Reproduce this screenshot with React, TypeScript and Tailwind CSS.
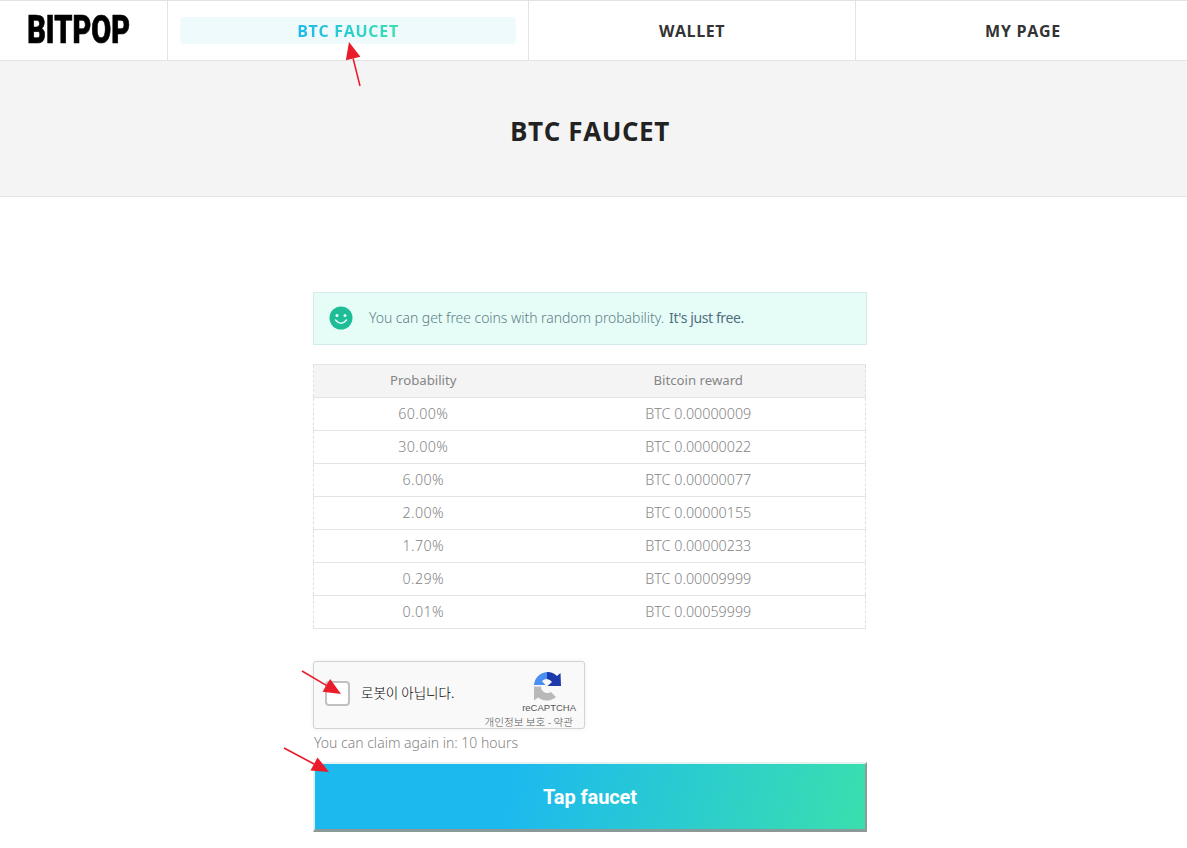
const rows = [
  ["60.00%", "BTC 0.00000009"],
  ["30.00%", "BTC 0.00000022"],
  ["6.00%", "BTC 0.00000077"],
  ["2.00%", "BTC 0.00000155"],
  ["1.70%", "BTC 0.00000233"],
  ["0.29%", "BTC 0.00009999"],
  ["0.01%", "BTC 0.00059999"],
];

function Arrow({ x1, y1, x2, y2 }: { x1: number; y1: number; x2: number; y2: number }) {
  const a = Math.atan2(y2 - y1, x2 - x1);
  const L = 17;
  const W = 7.5;
  const bx = x2 - L * Math.cos(a);
  const by = y2 - L * Math.sin(a);
  const px = -Math.sin(a) * W;
  const py = Math.cos(a) * W;
  return (
    <g>
      <line x1={x1} y1={y1} x2={bx} y2={by} stroke="#ea1c2b" strokeWidth="1.6" />
      <polygon points={`${x2},${y2} ${bx + px},${by + py} ${bx - px},${by - py}`} fill="#ea1c2b" />
    </g>
  );
}

function Recaptcha() {
  return (
    <svg width="28" height="29" viewBox="0 0 28 29" className="block">
      <path d="M14 0 L14 7 A7 7 0 0 0 9 9 L12.5 13 L1 13 A14 14 0 0 1 14 0 Z" fill="#4a90f2" />
      <path d="M14 0 A14 14 0 0 1 24 4 L27.5 1 L28 14 L14.5 14 L19 10 A7 7 0 0 0 14 7 Z" fill="#1c3aa9" />
      <path d="M1 14.5 L8 14.5 A6.5 6.5 0 0 0 18 20 L23 25 A14 14 0 0 1 5 25.5 L1 28.5 Z" fill="#b9b9b9" />
    </svg>
  );
}

export default function App() {
  return (
    <div className="relative w-[1187px] h-[848px] overflow-hidden bg-white font-['Open_Sans',sans-serif]">
      <header className="flex h-[61px] border-t border-b border-[#e3e3e3]">
        <div className="w-[168px] shrink-0 border-r border-[#e3e3e3] flex items-center justify-center pr-[10px] pb-px">
          <span className="font-['Roboto',sans-serif] font-black text-[38px] leading-none text-black inline-block scale-x-[0.76] [-webkit-text-stroke:0.7px_black]">
            BITPOP
          </span>
        </div>
        <div className="w-[361px] shrink-0 border-r border-[#e3e3e3] px-3 py-4">
          <div className="h-[27px] rounded-sm bg-[#eefafc] flex items-center justify-center">
            <span className="text-[16px] font-bold tracking-[0.7px] bg-linear-to-r from-[#23b9ea] to-[#3adfae] bg-clip-text text-transparent">
              BTC FAUCET
            </span>
          </div>
        </div>
        <div className="w-[327px] shrink-0 border-r border-[#e3e3e3] flex items-center justify-center text-[16px] font-bold tracking-[0.5px] text-[#333]">
          WALLET
        </div>
        <div className="w-[334px] shrink-0 flex items-center justify-center text-[16px] font-bold tracking-[0.7px] text-[#333]">
          MY PAGE
        </div>
      </header>

      <div className="w-[1180px] h-[136px] border-b border-[#e3e3e3] bg-[#f4f4f4] flex items-center justify-center">
        <h1 className="text-[26px] font-bold text-[#222] tracking-[0.6px] mt-[6px]">BTC FAUCET</h1>
      </div>
      <div className="absolute left-[1180px] top-[61px] w-[7px] h-[136px] border-b border-[#e3e3e3] bg-[#f4f4f4]" />

      <main className="w-[554px] ml-[313px] pt-[95px] font-['Noto_Sans',sans-serif]">
        <div className="h-[53px] border border-[#d2ecec] bg-[#e6fdf7] flex items-center pl-[15px] pb-[2px] text-[14px] text-[#5f7d88] font-light">
          <svg width="24" height="24" viewBox="0 0 24 24" className="shrink-0 mr-[16px]">
            <circle cx="12" cy="12" r="11.5" fill="#1fbd97" />
            <circle cx="8" cy="9.5" r="1.5" fill="#e6fdf7" />
            <circle cx="16" cy="9.5" r="1.5" fill="#e6fdf7" />
            <path d="M6.5 14 Q12 20.5 17.5 14" fill="none" stroke="#e6fdf7" strokeWidth="1.6" strokeLinecap="round" />
          </svg>
          <span className="tracking-[-0.05px]">You can get free coins with random probability.</span>
          <span className="ml-[5px] font-normal text-[#4f6f80] tracking-[-0.4px]">It's just free.</span>
        </div>

        <table className="mt-[19px] w-[553px] table-fixed border-collapse text-[14.3px] text-[#858585] font-light">
          <thead>
            <tr className="h-[33px] bg-[#f4f4f4] border-t border-b border-[#e4e4e4]">
              <th className="w-[220px] text-[13.2px] pr-px font-normal border-l border-dashed border-[#e0e0e0]">Probability</th>
              <th className="pr-[2px] text-[13.2px] font-normal border-r border-dashed border-[#e0e0e0]">Bitcoin reward</th>
            </tr>
          </thead>
          <tbody>
            {rows.map((r) => (
              <tr key={r[0]} className="h-[33px] border-b border-[#e4e4e4]">
                <td className="pr-[1px] tracking-[0.35px] text-center border-l border-dashed border-[#e0e0e0]">{r[0]}</td>
                <td className="pr-[2px] text-center border-r border-dashed border-[#e0e0e0]">{r[1]}</td>
              </tr>
            ))}
          </tbody>
        </table>

        <div className="mt-8 w-[272px] h-[68px] rounded-[3px] border border-[#d3d3d3] bg-[#f9f9f9] shadow-[0_0_4px_rgba(0,0,0,0.08)] flex relative">
          <div className="ml-[11px] mt-[19px] w-[25px] h-[25px] rounded-sm border-2 border-[#c1c1c1] bg-white" />
          <span className="ml-[11px] mt-[20px] text-[13.5px] leading-[20px] text-black font-['Noto_Sans_CJK_KR',sans-serif] font-light whitespace-nowrap">
            로봇이 아닙니다.
          </span>
          <div className="absolute right-[8px] top-0 flex flex-col items-end">
            <div className="mt-[10px] mr-[15px]">
              <Recaptcha />
            </div>
            <span className="text-[9.5px] leading-[12px] mt-[1px] text-[#555] font-['Liberation_Sans',sans-serif]">reCAPTCHA</span>
            <span className="text-[10.6px] leading-[12px] mt-[2px] mr-[3px] text-[#555] font-['Noto_Sans_CJK_KR',sans-serif] font-light whitespace-nowrap">
              개인정보 보호 - 약관
            </span>
          </div>
        </div>

        <p className="mt-[4px] h-[20px] leading-[20px] text-[14px] font-light text-[#858585] pl-px">You can claim again in: 10 hours</p>

        <button className="mt-[9px] w-[554px] h-[70px] border-t-2 border-l-2 border-b-[3px] border-r-2 border-t-[#e4f2f2] border-l-[#e4f2f2] border-r-[#8a9a98] border-b-[#8a9a98] bg-[linear-gradient(103deg,#1cb9ef_35%,#3adfae_100%)] text-white font-['Roboto',sans-serif] font-bold text-[20px] tracking-[-0.1px]">
          Tap faucet
        </button>
      </main>

      <svg className="absolute left-0 top-0 pointer-events-none" width="1187" height="848">
        <Arrow x1={360} y1={86} x2={349} y2={42} />
        <Arrow x1={302} y1={671} x2={341} y2={694} />
        <Arrow x1={284} y1={748} x2={329} y2={772} />
      </svg>
    </div>
  );
}
